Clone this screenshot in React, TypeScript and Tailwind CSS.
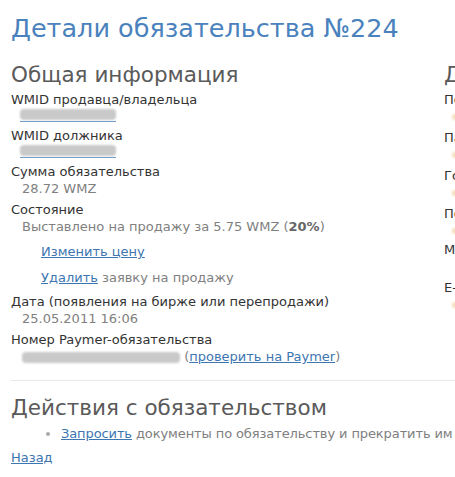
import React from 'react';

const Blur = ({ w }: { w: number }) => (
  <span
    className="inline-block align-middle h-[11px] bg-[#c9c9c9] rounded-sm blur-[1px]"
    style={{ width: w }}
  />
);

const Item = ({ label, children }: { label: string; children: React.ReactNode }) => (
  <div className="mb-[4px]">
    <div className="text-[#333] leading-[17px]">{label}</div>
    <div className="pl-[11px] text-[#808080] leading-[17px]">{children}</div>
  </div>
);

const WmidItem = ({ label, w }: { label: string; w: number }) => (
  <div className="mb-[4px]">
    <div className="text-[#333] leading-[17px]">{label}</div>
    <div className="pl-[9px] h-[15px] leading-[12px]">
      <span className="inline-block border-b border-[#6b9acb] pb-[1px]">
        <Blur w={w} />
      </span>
    </div>
  </div>
);

const Faint = () => (
  <div className="h-[17px] pl-[8px] flex items-center">
    <span className="inline-block w-[8px] h-[6px] bg-[#f3dfb6] blur-[1px] rounded-sm" />
  </div>
);

export default function App() {
  return (
    <div className="w-[455px] h-[477px] overflow-hidden bg-white font-['DejaVu_Sans',Verdana,sans-serif] text-[13px]">
      <div className="pl-[11px] pt-[12px]">
        <h1 className="text-[25.5px] leading-[32px] text-[#4a82bd] whitespace-nowrap">Детали обязательства №224</h1>
        <div className="flex mt-[18px]">
          <div className="w-[433px] shrink-0">
            <h2 className="text-[21.5px] leading-[26px] text-[#5a5a5a] whitespace-nowrap mb-[3px]">Общая информация</h2>
            <WmidItem label="WMID продавца/владельца" w={96} />
            <WmidItem label="WMID должника" w={96} />
            <Item label="Сумма обязательства">28.72 WMZ</Item>
            <Item label="Состояние">
              Выставлено на продажу за 5.75 WMZ (<b className="text-[#666]">20%</b>)
              <p className="pl-[19px] mt-[8px]">
                <a className="text-[#3d76b0] underline">Изменить цену</a>
              </p>
              <p className="pl-[19px] mt-[9px] pb-[3px]">
                <a className="text-[#3d76b0] underline">Удалить</a> заявку на продажу
              </p>
            </Item>
            <Item label="Дата (появления на бирже или перепродажи)">25.05.2011 16:06</Item>
            <Item label="Номер Paymer-обязательства">
              <Blur w={158} /> (<a className="text-[#3d76b0] underline">проверить на Paymer</a>)
            </Item>
          </div>
          <div className="shrink-0 text-[#333] whitespace-nowrap">
            <h2 className="text-[21.5px] leading-[26px] text-[#5a5a5a] mb-[3px]">Д</h2>
            <div className="leading-[17px]">По</div>
            <Faint />
            <div className="leading-[17px] mt-[4px]">Па</div>
            <Faint />
            <div className="leading-[17px] mt-[4px]">Го</div>
            <Faint />
            <div className="leading-[17px] mt-[4px]">По</div>
            <Faint />
            <div className="leading-[17px] mt-[2px]">М</div>
            <div className="leading-[17px] mt-[21px]">Е-</div>
            <Faint />
          </div>
        </div>
        <hr className="mt-[11px] border-[#eaeaea]" />
        <h2 className="mt-[14px] text-[21.5px] leading-[26px] text-[#5a5a5a] whitespace-nowrap">Действия с обязательством</h2>
        <ul className="mt-[4px] pl-[50px] list-disc text-[#808080] marker:text-[#aaa] whitespace-nowrap tracking-[-0.1px]">
          <li className="leading-[17px]">
            <a className="text-[#3d76b0] underline">Запросить</a> документы по обязательству и прекратить им
          </li>
        </ul>
        <p className="mt-[7px] leading-[17px]">
          <a className="text-[#3d76b0] underline">Назад</a>
        </p>
      </div>
    </div>
  );
}
